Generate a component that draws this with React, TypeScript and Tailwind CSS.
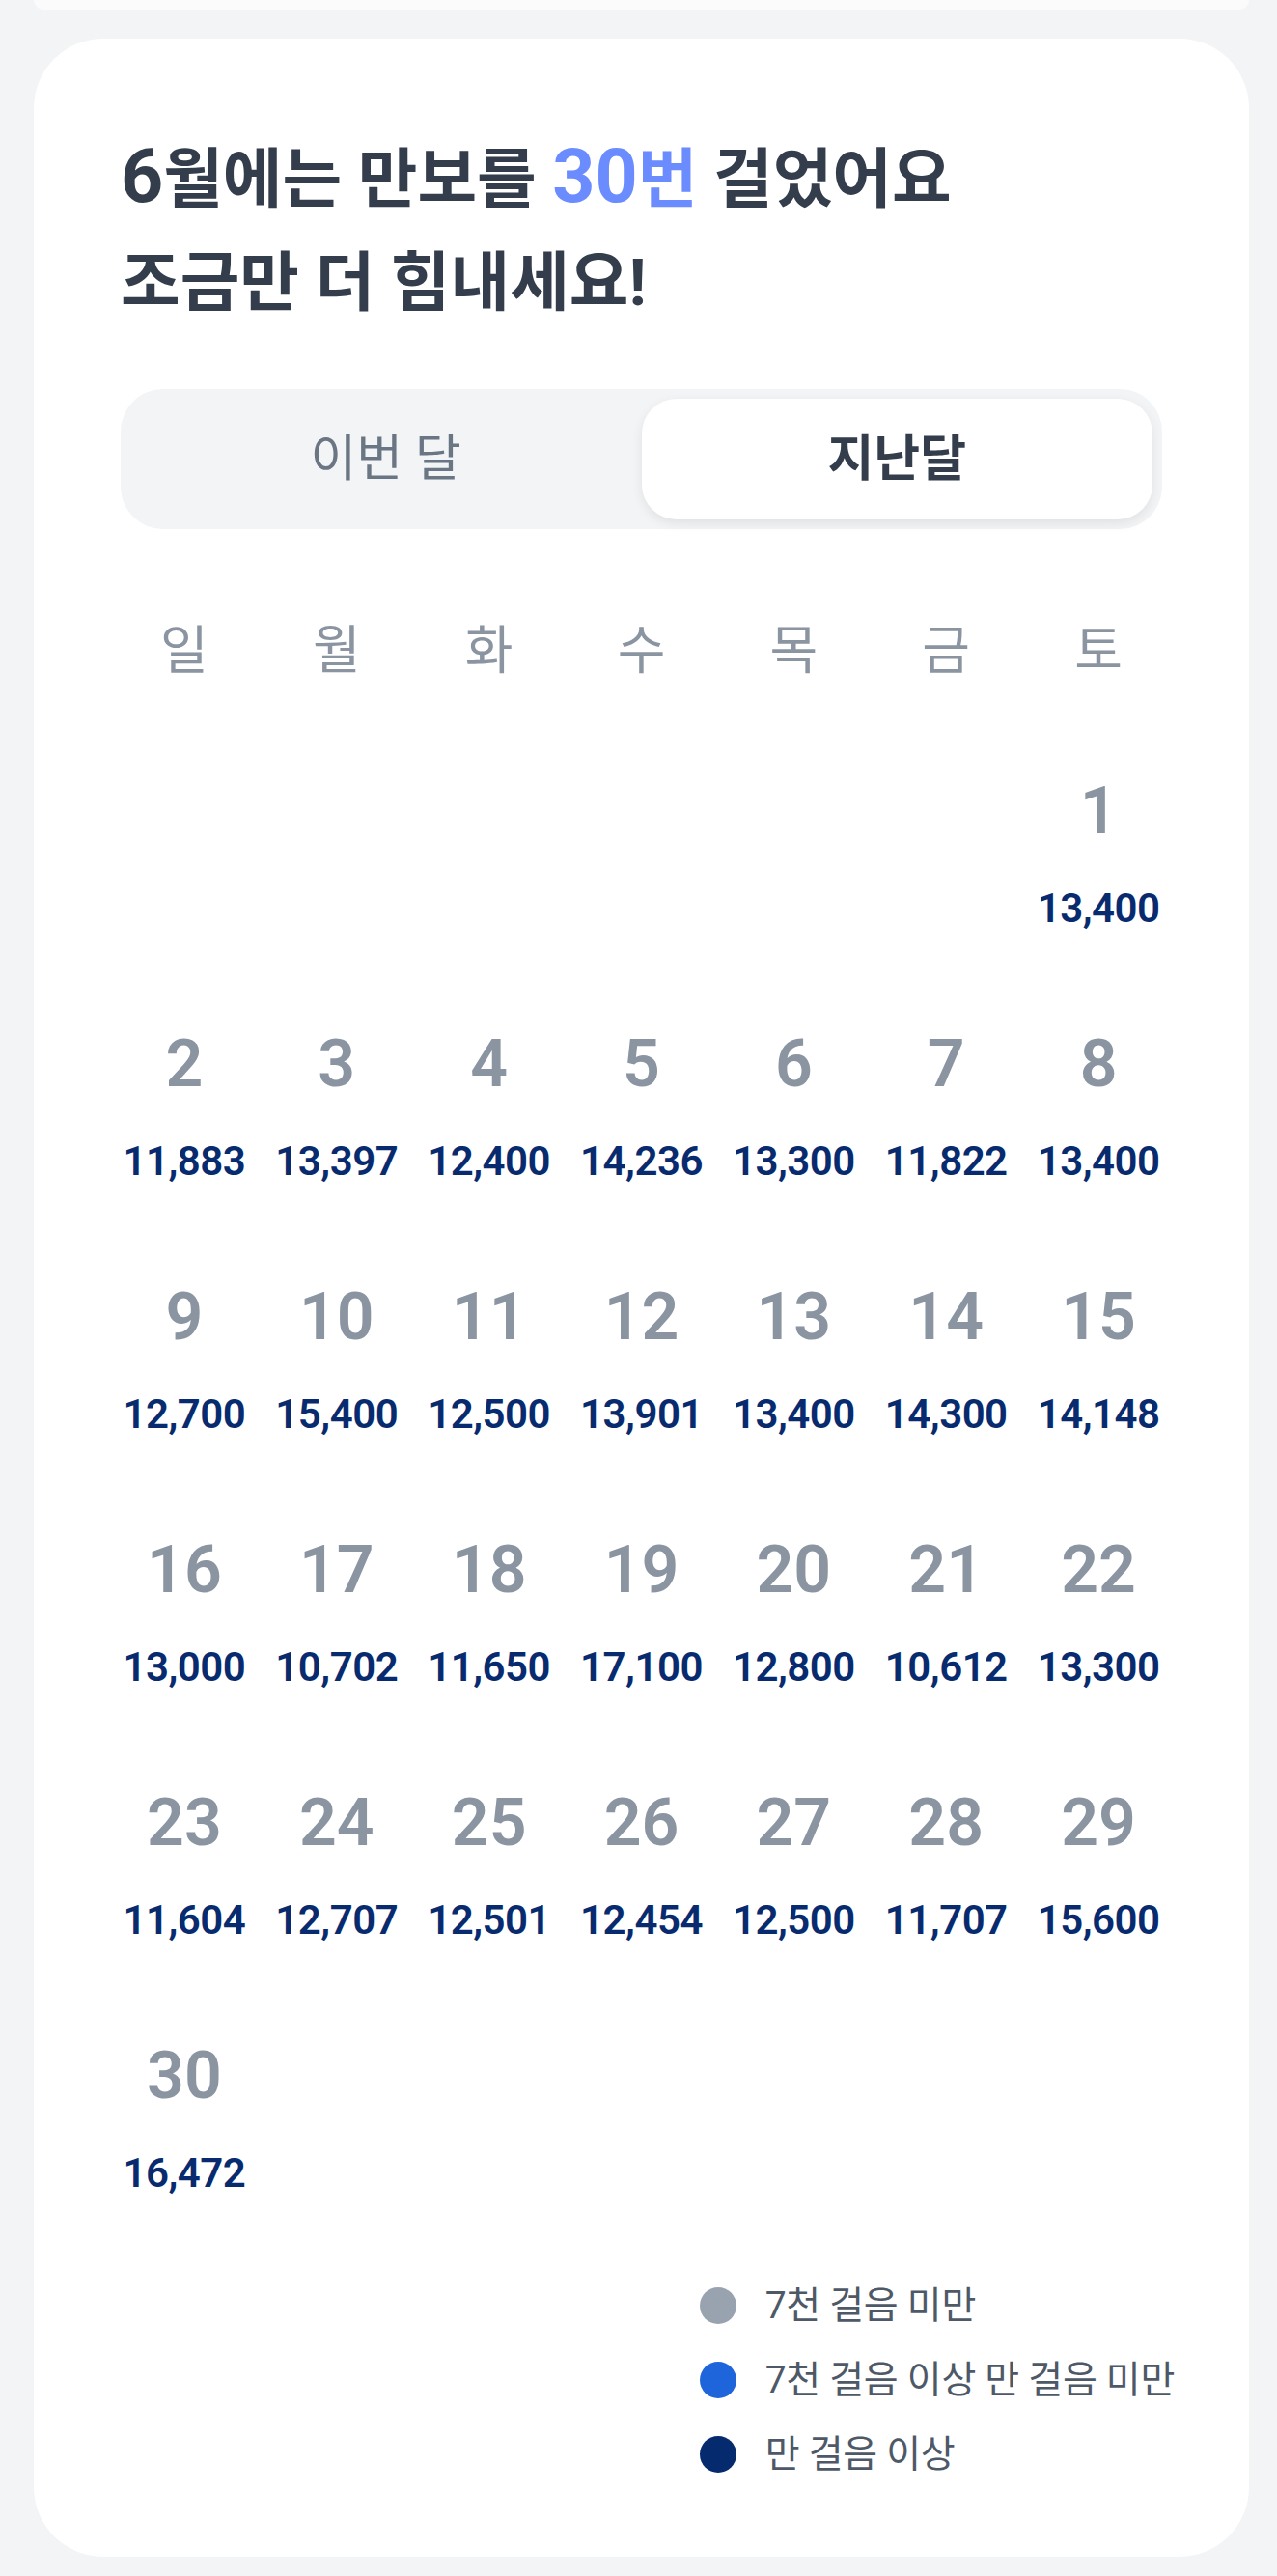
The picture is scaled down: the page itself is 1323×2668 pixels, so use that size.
import React from "react"

const WEEKDAYS = ["일", "월", "화", "수", "목", "금", "토"]

// June steps, day 1 falls on Saturday
const STEPS = [
  13400,
  11883, 13397, 12400, 14236, 13300, 11822, 13400,
  12700, 15400, 12500, 13901, 13400, 14300, 14148,
  13000, 10702, 11650, 17100, 12800, 10612, 13300,
  11604, 12707, 12501, 12454, 12500, 11707, 15600,
  16472,
]

const LEGEND = [
  { label: "7천 걸음 미만", dot: "bg-[#99a3b0]" },
  { label: "7천 걸음 이상 만 걸음 미만", dot: "bg-[#1e64da]" },
  { label: "만 걸음 이상", dot: "bg-[#062a6e]" },
]

function DayCell({ day, steps }: { day: number; steps: number }) {
  return (
    <div className="flex flex-col items-center">
      <span className="h-[80px] text-[68px] leading-[80px] font-semibold text-[#8b95a1]">{day}</span>
      <span className="mt-[36px] h-[50px] text-[42px] leading-[50px] font-semibold tracking-[-0.5px] text-[#072b6e]">
        {steps.toLocaleString("en-US")}
      </span>
    </div>
  )
}

export default function App() {
  const cells: (number | null)[] = [null, null, null, null, null, null]
  STEPS.forEach((_, i) => cells.push(i + 1))

  return (
    <div className="min-h-[2668px] bg-[#f2f4f6] font-['Roboto','Noto_Sans_CJK_KR',sans-serif]">
      {/* bottom edge of the card above */}
      <div className="ml-[35px] mr-[29px] h-[10px] rounded-b-[10px] bg-[#fbfbfc]" />

      <div className="ml-[35px] mr-[29px] mt-[30px] rounded-[72px] bg-white px-[90px] pt-[90px] pb-[78px]">
        <h1 className="text-[67px] leading-[107px] font-bold text-[#333d4b]">
          <span className="text-[77px]">6</span>월에는 만보를{" "}
          <span className="text-[#6b8cff]">
            <span className="text-[77px]">30</span>번
          </span>{" "}
          걸었어요
          <br />
          조금만 더 힘내세요!
        </h1>

        {/* month toggle */}
        <div className="mt-[56px] flex h-[145px] rounded-[44px] bg-[#f2f4f6] p-[10px]">
          <button className="flex-1 text-[52px] font-normal text-[#6b7684]">이번 달</button>
          <button className="flex-1 rounded-[36px] bg-white text-[52px] font-bold text-[#333d4b] shadow-[0_4px_12px_rgba(0,0,0,0.08)]">
            지난달
          </button>
        </div>

        <div className="-mx-[13px] mt-[92px] grid grid-cols-7">
          {WEEKDAYS.map((w) => (
            <span key={w} className="text-center text-[54px] leading-[70px] text-[#8b95a1]">
              {w}
            </span>
          ))}
        </div>

        <div className="-mx-[13px] mt-[90px] grid grid-cols-7 gap-y-[96px]">
          {cells.map((d, i) =>
            d === null ? (
              <div key={`e${i}`} className="h-[166px]" />
            ) : (
              <DayCell key={d} day={d} steps={STEPS[d - 1]} />
            )
          )}
        </div>

        {/* legend */}
        <div className="-mr-[13px] mt-[84px] flex justify-end">
          <div className="flex flex-col gap-[21px]">
            {LEGEND.map((l) => (
              <div key={l.label} className="flex h-[56px] items-center gap-[30px]">
                <span className={`h-[38px] w-[38px] rounded-full ${l.dot}`} />
                <span className="text-[39px] tracking-[-0.3px] text-[#4e5968]">{l.label}</span>
              </div>
            ))}
          </div>
        </div>
      </div>
    </div>
  )
}
